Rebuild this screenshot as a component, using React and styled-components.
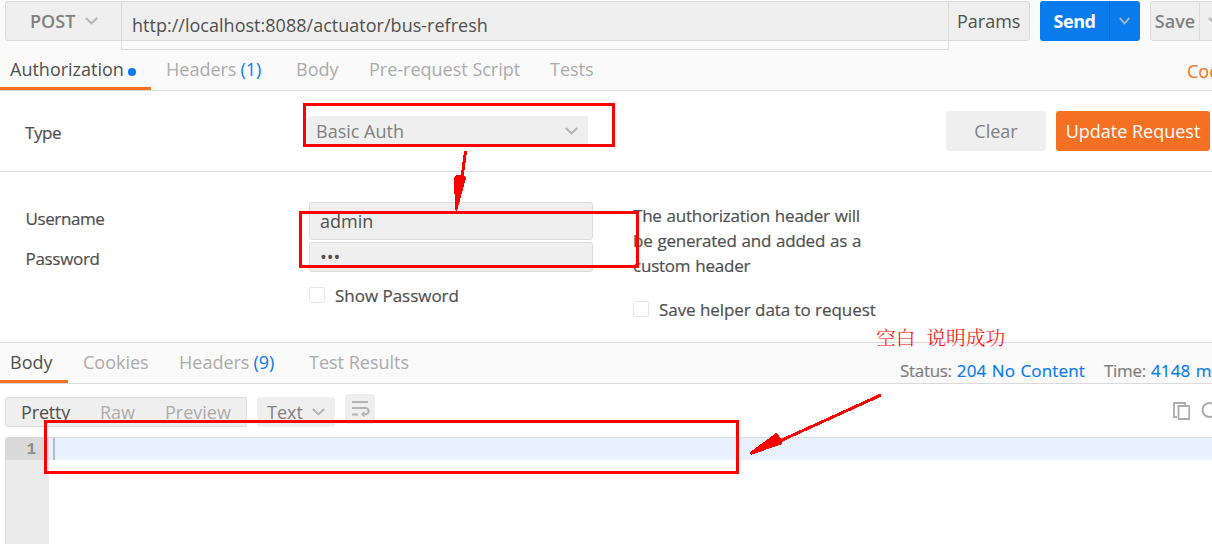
import styled, { createGlobalStyle, css } from 'styled-components'

const GlobalStyle = createGlobalStyle`
    html, body {
        margin: 0;
        padding: 0;
        overflow: hidden;
    }
    * {
        box-sizing: border-box;
    }
`;

const line = '1px solid #dbdbdb';

const Page = styled.div`
    position: relative;
    width: 1212px;
    height: 544px;
    overflow: hidden;
    display: flex;
    flex-direction: column;
    background: white;
    color: #505050;
    font-family: 'Open Sans', 'Noto Sans CJK SC', sans-serif;
    font-size: 18px;
    line-height: 24px;
    white-space: nowrap;
`;

/* request bar */
const RequestBar = styled.header`
    display: flex;
    height: 50px;
    padding: 1px 0 0 5px;
    background: #fafafa;
    flex-shrink: 0;
`;

const UrlGroup = styled.div`
    display: flex;
    width: 1025px;
    height: 40px;
    margin-right: 10px;
    border: ${line};
    border-radius: 3px;
    background: #efefef;
    flex-shrink: 0;
`;

const Method = styled.div`
    display: flex;
    align-items: center;
    justify-content: space-between;
    width: 115px;
    padding: 0 23px 0 24px;
    color: #808080;
    font-weight: 600;
`;

const Url = styled.div`
    width: 828px;
    height: 49px;
    margin-top: -1px;
    padding: 11px 0 0 10px;
    border: ${line};
    letter-spacing: 0.02px;
`;

const Params = styled.div`
    flex: 1;
    padding: 7px 0 0 8px;
`;

const SplitButton = styled.div`
    display: flex;
    width: 100px;
    height: 40px;
    margin-right: 10px;
    border-radius: 3px;
    font-weight: 600;
    flex-shrink: 0;
    overflow: hidden;
    ${props =>
    props.primary
    ? css`
        background: #097bed;
        color: white;
        font-weight: 700;
        letter-spacing: -0.5px;
    `
    : css`
        background: #efefef;
        color: #808080;
        border: ${line};
    `};
`;

const SplitLabel = styled.div`
    width: ${props => props.width}px;
    display: flex;
    align-items: center;
    justify-content: center;
    border-right: 1px solid ${props => props.divider};
`;

const SplitArrow = styled.div`
    width: 30px;
    display: flex;
    align-items: center;
    justify-content: center;
    padding-right: 2px;
`;

/* tabs, used by the request and by the response */
const TabBar = styled.nav`
    display: flex;
    height: 41px;
    background: #fafafa;
    border-bottom: ${line};
    flex-shrink: 0;
`;

const Tab = styled.div`
    display: flex;
    width: ${props => props.width}px;
    height: 40px;
    padding: 7px 0 0 ${props => props.left || 15}px;
    color: #acacac;
    ${props => props.active && css`
        color: #505050;
        border-bottom: 3px solid #f47023;
    `};
`;

const Count = styled.span`
    margin-left: 4px;
    color: #097bed;
`;

const Dot = styled.span`
    width: 8px;
    height: 8px;
    margin: 11px 0 0 4px;
    border-radius: 50%;
    background: #097bed;
`;

const CodeLink = styled.div`
    margin-left: auto;
    width: 25px;
    padding-top: 9px;
    color: #f47023;
`;

/* auth type */
const TypeRow = styled.section`
    display: flex;
    height: 81px;
    padding: 20px 0 0 25px;
    border-bottom: ${line};
    flex-shrink: 0;
`;

const Label = styled.div`
    font-size: 17px;
    letter-spacing: ${props => props.spacing || -0.4}px;
    -webkit-text-stroke: 0.2px #505050;
`;

const TypeLabel = styled(Label)`
    width: 282px;
    padding-top: 10px;
`;

const Select = styled.div`
    display: flex;
    align-items: center;
    justify-content: space-between;
    width: 281px;
    height: 31px;
    margin-top: 5px;
    padding: 0 10px 2px 9px;
    border-radius: 3px;
    background: #efefef;
    color: #808080;
`;

const Button = styled.div`
    display: flex;
    align-items: center;
    justify-content: center;
    width: ${props => props.width}px;
    height: 40px;
    border-radius: 3px;
    background: ${props => props.accent ? '#f47023' : '#efefef'};
    color: ${props => props.accent ? 'white' : '#808080'};
    font-weight: ${props => props.accent ? 500 : 400};
`;

const Actions = styled.div`
    display: flex;
    gap: 10px;
    margin-left: auto;
    padding-right: 2px;
`;

/* credentials */
const Credentials = styled.section`
    display: grid;
    grid-template-columns: 283.5px 324px 1fr;
    height: 171px;
    padding: 30px 0 0 25.5px;
    border-bottom: ${line};
    flex-shrink: 0;
`;

const LabelColumn = styled.div`
    display: flex;
    flex-direction: column;
    gap: 16px;
    padding-top: 5px;
`;

const Column = styled.div`
    display: flex;
    flex-direction: column;
`;

const Field = styled.div`
    width: 284px;
    height: ${props => props.height}px;
    margin-bottom: 2px;
    padding: ${props => props.top}px 0 0 10px;
    border: ${line};
    border-radius: 3px;
    background: #efefef;
`;

const CheckRow = styled.div`
    display: flex;
    gap: 10px;
    margin-top: ${props => props.top}px;
`;

const CheckBox = styled.span`
    width: 16px;
    height: 16px;
    margin-top: 3px;
    border: 1px solid #e6e6e6;
    border-radius: 2px;
    background: white;
`;

const Note = styled(Label)`
    padding-top: 1px;
    line-height: 25px;
    word-spacing: 0.7px;
`;

/* response */
const Status = styled.div`
    display: flex;
    margin-left: auto;
    width: 312px;
    padding-top: 16px;
    color: #808080;
    font-size: 17px;
    letter-spacing: -0.3px;
    -webkit-text-stroke: 0.2px currentColor;
`;

const StatusItem = styled.div`
    width: ${props => props.width}px;
    flex-shrink: 0;
`;

const StatusValue = styled.span`
    margin-left: 5px;
    color: #097bed;
    letter-spacing: 0.15px;
    word-spacing: 0.8px;
`;

const Toolbar = styled.div`
    display: flex;
    height: 53px;
    padding: 10px 0 0 5px;
    flex-shrink: 0;
`;

const ViewGroup = styled.div`
    display: flex;
    width: 242px;
    height: 30px;
    margin: 3px 10px 0 0;
    padding-left: 15px;
    border: ${line};
    border-radius: 3px;
    background: #efefef;
`;

const View = styled.div`
    width: ${props => props.width}px;
    padding-top: 2px;
    color: ${props => props.active ? '#505050' : '#acacac'};
    letter-spacing: ${props => props.active ? -0.15 : 0}px;
`;

const FormatSelect = styled.div`
    display: flex;
    justify-content: space-between;
    width: 78px;
    height: 30px;
    margin: 3px 10px 0 0;
    padding: 3px 10px 0;
    border-radius: 3px;
    background: #efefef;
    color: #808080;

    svg {
        margin-top: 8px;
    }
`;

const WrapButton = styled.div`
    width: 30px;
    height: 30px;
    border-radius: 3px;
    background: #efefef;
`;

const Tools = styled.div`
    display: flex;
    gap: 10px;
    margin-left: auto;
    width: 40px;
    padding-top: 8px;

    svg {
        flex-shrink: 0;
    }
`;

const Editor = styled.div`
    display: flex;
    flex: 1;
    margin-left: 5px;
    border-top: ${line};
    border-left: ${line};
    border-top-left-radius: 3px;
`;

const Gutter = styled.div`
    width: 43px;
    background: #ebebeb;
`;

const LineNumber = styled.div`
    height: 22px;
    padding-right: 13px;
    background: #dadada;
    color: #8c8c8c;
    font: bold 16px/25px 'Liberation Mono', monospace;
    text-align: right;
`;

const Code = styled.div`
    flex: 1;
    height: 22px;
    padding-left: 4px;
    background: #e8f2fe;
`;

const Caret = styled.div`
    width: 2px;
    height: 22px;
    background: #b4bec8;
`;

/* red marks lying over the whole page */
const Mark = styled.div`
    position: absolute;
    left: ${props => props.x}px;
    top: ${props => props.y}px;
    width: ${props => props.w}px;
    height: ${props => props.h}px;
    border: 3px solid red;
`;

const Arrows = styled.svg`
    position: absolute;
    left: 0;
    top: 0;
`;

const Remark = styled.div`
    position: absolute;
    left: 876px;
    top: 325px;
    color: red;
    font-family: 'Noto Serif CJK SC', 'Noto Sans CJK SC', sans-serif;
    font-size: 19.8px;
    font-weight: 300;
    word-spacing: 5.5px;
`;

const Chevron = ({ color = '#b3b3b3', size = 13 }) => (
    <svg width={size} height="8" viewBox="0 0 12 8" fill="none" preserveAspectRatio="none">
        <path d="M0.8 1L6 6.3L11.2 1" stroke={color} strokeWidth="1.9" />
    </svg>
);

const WrapIcon = () => (
    <svg width="30" height="30" fill="none" stroke="#b3b3b3" strokeWidth="2">
        <path d="M7 8H23M7 14H20.5A2.9 2.9 0 0 1 20.5 20.3H18M7 20.5H13" />
        <path d="M19.5 17L16 20.3L19.5 23.5Z" fill="#b3b3b3" stroke="none" />
    </svg>
);

const CopyIcon = () => (
    <svg width="19" height="20" fill="none" stroke="#acacac" strokeWidth="1.8">
        <path d="M5 15H2V1H13V3.5" />
        <path d="M6.5 4H17.2V17H6.5Z" />
    </svg>
);

const SearchIcon = () => (
    <svg width="20" height="20" fill="none" stroke="#acacac" strokeWidth="2">
        <circle cx="8.5" cy="8" r="7" />
        <path d="M13.5 13L18 18" />
    </svg>
);

const App = () => (
    <Page>
        <GlobalStyle />
        <RequestBar>
            <UrlGroup>
                <Method>POST <Chevron /></Method>
                <Url>http://localhost:8088/actuator/bus-refresh</Url>
                <Params>Params</Params>
            </UrlGroup>
            <SplitButton primary>
                <SplitLabel width={70} divider="#076bce">Send</SplitLabel>
                <SplitArrow><Chevron color="#a9b5c4" size={11} /></SplitArrow>
            </SplitButton>
            <SplitButton>
                <SplitLabel width={49} divider="#dbdbdb">Save</SplitLabel>
                <SplitArrow><Chevron /></SplitArrow>
            </SplitButton>
        </RequestBar>

        <TabBar>
            <Tab active width={151} left={10}>Authorization<Dot /></Tab>
            <Tab width={130}>Headers<Count>(1)</Count></Tab>
            <Tab width={73}>Body</Tab>
            <Tab width={181}>Pre-request Script</Tab>
            <Tab width={90}>Tests</Tab>
            <CodeLink>Code</CodeLink>
        </TabBar>

        <TypeRow>
            <TypeLabel>Type</TypeLabel>
            <Select>Basic Auth <Chevron /></Select>
            <Actions>
                <Button width={100}>Clear</Button>
                <Button width={154} accent>Update Request</Button>
            </Actions>
        </TypeRow>

        <Credentials>
            <LabelColumn>
                <Label>Username</Label>
                <Label spacing={-0.3}>Password</Label>
            </LabelColumn>
            <Column>
                <Field height={38} top={6}>admin</Field>
                <Field height={30} top={2}>•••</Field>
                <CheckRow top={10}><CheckBox /><Label spacing={-0.02}>Show Password</Label></CheckRow>
            </Column>
            <Column>
                <Note spacing={-0.22}>
                    The authorization header will<br />
                    be generated and added as a<br />
                    custom header
                </Note>
                <CheckRow top={20}><CheckBox /><Label spacing={-0.06}>Save helper data to request</Label></CheckRow>
            </Column>
        </Credentials>

        <TabBar>
            <Tab active width={68} left={10}>Body</Tab>
            <Tab width={96}>Cookies</Tab>
            <Tab width={130}>Headers<Count>(9)</Count></Tab>
            <Tab width={140}>Test Results</Tab>
            <Status>
                <StatusItem width={204}>Status:<StatusValue>204 No Content</StatusValue></StatusItem>
                <StatusItem width={130}>Time:<StatusValue>4148 ms</StatusValue></StatusItem>
            </Status>
        </TabBar>

        <Toolbar>
            <ViewGroup>
                <View active width={79}>Pretty</View>
                <View width={65}>Raw</View>
                <View width={80}>Preview</View>
            </ViewGroup>
            <FormatSelect>Text <Chevron /></FormatSelect>
            <WrapButton><WrapIcon /></WrapButton>
            <Tools><CopyIcon /><SearchIcon /></Tools>
        </Toolbar>
        <Editor>
            <Gutter><LineNumber>1</LineNumber></Gutter>
            <Code><Caret /></Code>
        </Editor>

        <Mark x={303} y={103} w={312} h={44} />
        <Mark x={299} y={211} w={340} h={57} />
        <Mark x={44} y={420} w={695} h={54} />
        <Arrows width="1212" height="544" fill="red" shapeRendering="crispEdges">
            <path d="M465.5 151L462 178M881 395L780 441" stroke="red" strokeWidth="3" />
            <path d="M454 177L457 175L465 176L466 178L457 211L455 210Z" />
            <path d="M776 433L779 436L783 441L782 444L751 455L749 453Z" />
        </Arrows>
        <Remark>空白 说明成功</Remark>
    </Page>
);

export default App;
